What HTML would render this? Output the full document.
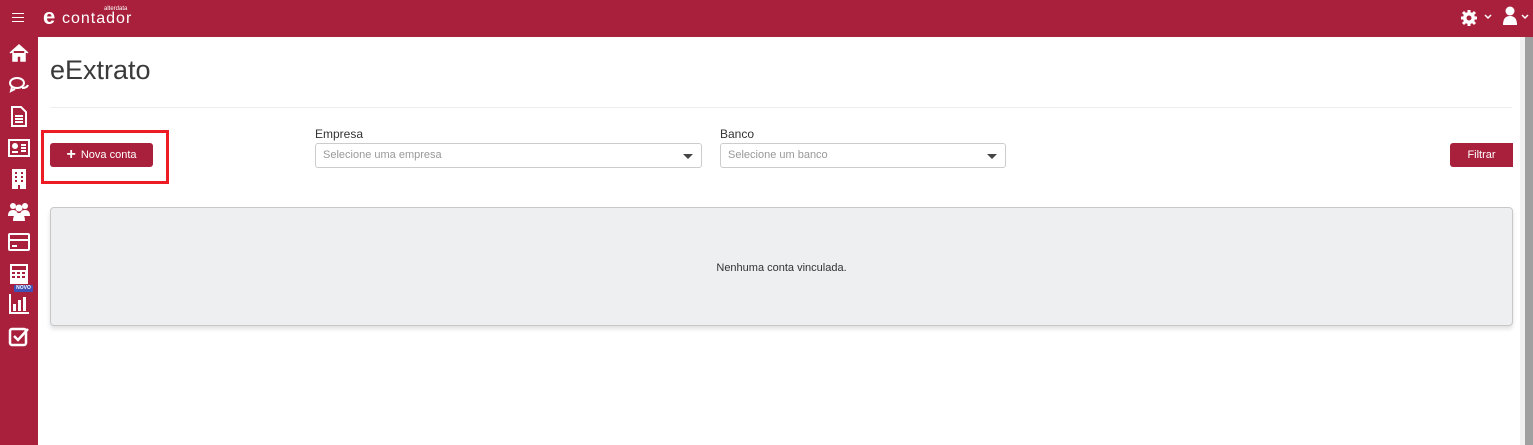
<!DOCTYPE html>
<html><head><meta charset="utf-8"><style>
*{box-sizing:border-box;margin:0;padding:0}
body{width:1533px;height:445px;overflow:hidden;background:#fff;font-family:"Liberation Sans",Arial,sans-serif;position:relative}
.top{position:absolute;left:0;top:0;width:1533px;height:37px;background:#a8203b}
.side{position:absolute;left:0;top:37px;width:38px;height:408px;background:#a8203b}
.scroll{position:absolute;left:1525px;top:37px;width:8px;height:408px;background:#a0a0a0}
.scroll2{position:absolute;left:1520px;top:37px;width:5px;height:408px;background:#f1f1f1}
h1{position:absolute;left:50px;top:55px;font-size:27px;font-weight:normal;color:#3a3a3a}
.hr{position:absolute;left:50px;top:107px;width:1462px;height:1px;background:#eee}
.red{position:absolute;left:41px;top:130px;width:128px;height:54px;border:3px solid #ed1c24}
.btn{position:absolute;background:#a8203b;color:#fff;font-size:11px;border-radius:3px;display:flex;align-items:center;justify-content:center}
.lbl{position:absolute;font-size:12px;color:#333}
.sel{position:absolute;height:25px;border:1px solid #ccc;border-radius:3px;font-size:11px;color:#999;padding:5px 7px}
.sel:after{content:"";position:absolute;right:8px;top:10px;border:5px solid transparent;border-top:5px solid #444;border-bottom:0}
.panel{position:absolute;left:50px;top:207px;width:1463px;height:119px;background:#edeff0;border:1px solid #c8c8c8;border-radius:4px;box-shadow:0 3px 4px rgba(0,0,0,.12);font-size:11px;color:#333;text-align:center;line-height:117px;padding-top:2px}
.ic{position:absolute;left:8px;width:22px;height:22px}
</style></head><body>
<div class="top"></div>
<div style="position:absolute;left:12px;top:13px;width:12px;height:1px;background:#fff;box-shadow:0 4px 0 #fff,0 8px 0 #fff"></div>
<div style="position:absolute;left:43px;top:6px;color:#fff;font-size:22px;font-weight:bold;line-height:22px">e</div>
<div style="position:absolute;left:62px;top:10px;color:#fff;font-size:16px;letter-spacing:1px">contador</div>
<div style="position:absolute;left:104px;top:6px;color:#fff;font-size:6px">alterdata</div>
<svg style="position:absolute;left:1460px;top:9px" width="18" height="18" viewBox="0 0 18 18"><circle cx="9" cy="9" r="6" fill="#fff"/><g stroke="#fff" stroke-width="3"><line x1="9" y1="1" x2="9" y2="17"/><line x1="1" y1="9" x2="17" y2="9"/><line x1="3" y1="3" x2="15" y2="15"/><line x1="15" y1="3" x2="3" y2="15"/></g><circle cx="9" cy="9" r="2.5" fill="#a8203b"/></svg>
<svg style="position:absolute;left:1484px;top:14px" width="8" height="6"><path d="M1 1l3 3 3-3" stroke="#fff" fill="none" stroke-width="1.5"/></svg>
<svg style="position:absolute;left:1502px;top:6px" width="16" height="20"><circle cx="8" cy="5" r="4.5" fill="#fff"/><path d="M1 19q0-9 7-9t7 9z" fill="#fff"/></svg>
<svg style="position:absolute;left:1521px;top:14px" width="8" height="6"><path d="M1 1l3 3 3-3" stroke="#fff" fill="none" stroke-width="1.5"/></svg>
<div class="side"></div>
<svg class="ic" style="top:42px" viewBox="0 0 22 22"><path d="M2 11L11 3l9 8M5 9v10h4v-5h4v5h4V9" fill="#fff" stroke="#fff" stroke-width="1.5"/></svg>
<svg class="ic" style="top:74px" viewBox="0 0 22 22" fill="none" stroke="#fff" stroke-width="2"><ellipse cx="9" cy="9" rx="7" ry="5"/><path d="M4 13l-1 4 4-2M14 14q5 0 6-3"/></svg>
<svg class="ic" style="top:105px" viewBox="0 0 22 22" fill="none" stroke="#fff" stroke-width="2"><path d="M4 2h9l5 5v14H4z M7 11h8M7 14h8M7 17h8"/></svg>
<svg class="ic" style="top:137px" viewBox="0 0 22 22" fill="none" stroke="#fff" stroke-width="2"><rect x="1" y="3" width="20" height="16"/><circle cx="7" cy="9" r="2" fill="#fff"/><path d="M4 15h6M13 8h5M13 11h5M13 14h5" /></svg>
<svg class="ic" style="top:168px" viewBox="0 0 22 22"><rect x="4" y="1" width="14" height="20" fill="#fff"/><g fill="#a8203b"><rect x="7" y="4" width="2" height="2"/><rect x="13" y="4" width="2" height="2"/><rect x="7" y="8" width="2" height="2"/><rect x="13" y="8" width="2" height="2"/><rect x="7" y="12" width="2" height="2"/><rect x="13" y="12" width="2" height="2"/><rect x="10" y="17" width="2" height="4"/></g></svg>
<svg class="ic" style="top:200px" viewBox="0 0 22 22" fill="#fff"><circle cx="5" cy="6" r="3"/><circle cx="17" cy="6" r="3"/><circle cx="11" cy="8" r="3.5"/><path d="M0 16q0-6 5-6t5 6zM12 16q0-6 5-6t5 6zM5 21q0-8 6-8t6 8z"/></svg>
<svg class="ic" style="top:231px" viewBox="0 0 22 22" fill="none" stroke="#fff" stroke-width="2"><rect x="1" y="3" width="20" height="16" rx="1"/><path d="M1 9h20M4 15h5"/></svg>
<svg class="ic" style="top:263px" viewBox="0 0 22 22"><rect x="2" y="1" width="18" height="20" fill="#fff"/><rect x="4" y="3" width="14" height="4" fill="#a8203b"/><g fill="#a8203b"><rect x="4" y="9" width="3" height="2"/><rect x="9" y="9" width="3" height="2"/><rect x="14" y="9" width="3" height="2"/><rect x="4" y="13" width="3" height="2"/><rect x="9" y="13" width="3" height="2"/><rect x="14" y="13" width="3" height="2"/></g></svg>
<div style="position:absolute;left:14px;top:285px;width:19px;height:7px;background:#3f51b5;color:#fff;font-size:5px;line-height:7px;text-align:center;border-radius:1px;font-weight:bold">NOVO</div>
<svg class="ic" style="top:293px" viewBox="0 0 22 22" fill="#fff"><path d="M1 1v20h20v-2H3V1z"/><rect x="5" y="11" width="3" height="7"/><rect x="10" y="7" width="3" height="11"/><rect x="15" y="4" width="3" height="14"/></svg>
<svg class="ic" style="top:325px" viewBox="0 0 22 22" fill="none" stroke="#fff" stroke-width="2.5"><rect x="2" y="4" width="16" height="16" rx="2"/><path d="M6 11l4 4 10-11"/></svg>
<div class="scroll2"></div><div class="scroll"></div>
<h1>eExtrato</h1>
<div class="hr"></div>
<div class="red"></div>
<div class="btn" style="left:50px;top:143px;width:103px;height:24px"><span style="font-size:16px;font-weight:bold;margin-right:5px">+</span>Nova conta</div>
<div class="lbl" style="left:315px;top:127px">Empresa</div>
<div class="sel" style="left:315px;top:143px;width:387px">Selecione uma empresa</div>
<div class="lbl" style="left:720px;top:127px">Banco</div>
<div class="sel" style="left:720px;top:143px;width:286px">Selecione um banco</div>
<div class="btn" style="left:1450px;top:143px;width:63px;height:24px;border-radius:3px 0 0 3px">Filtrar</div>
<div class="panel">Nenhuma conta vinculada.</div>
</body></html>
